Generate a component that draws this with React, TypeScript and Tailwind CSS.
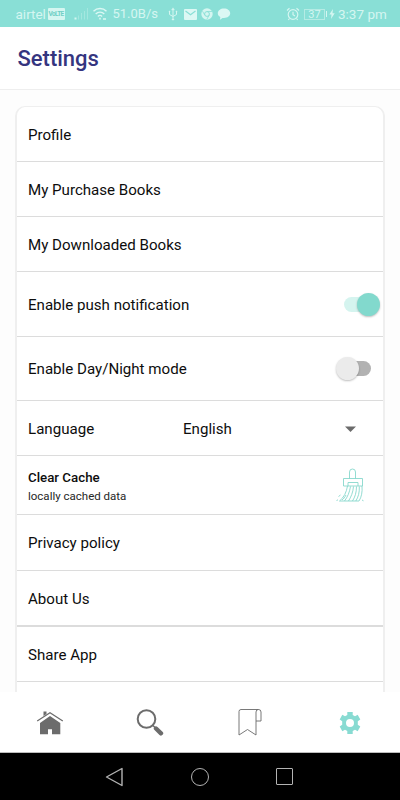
import type { ReactNode } from 'react';
import clsx from 'clsx';

function StatusBar() {
  return (
    <div className="flex h-[27px] items-center bg-[#89dfd6] pt-px pr-[14px] pl-[15.5px] text-[13px] text-[#d5f6f1]">
      <span className="w-[32px] text-[13.500px] whitespace-nowrap">airtel</span>
      <span className="flex h-[12px] w-[17px] items-center justify-center rounded-[1px] bg-[#d5f6f1] text-[6.500px] leading-none font-bold tracking-[-0.6px] text-[#6fcfc5]">
        VoLTE
      </span>
      <svg className="ml-2 h-3.5 w-4" viewBox="0 0 16 14" fill="none" stroke="#d5f6f1">
        <path d="M2.500 10.500v2" strokeWidth="2" />
        <path d="M5.500 8.500v4M8.500 6v6.500M11.500 4v8.500M14.500 1v11.500" opacity=".35" />
      </svg>
      <svg className="ml-[3px] h-3.5 w-4" viewBox="0 0 16 14" fill="none" stroke="#dcf8f4" strokeWidth="1.400">
        <path d="M1.500 4.200a9.300 9.300 0 0 1 13 0M3.700 6.900a6.200 6.200 0 0 1 8.600 0M5.900 9.400a3 3 0 0 1 4.200 0" />
        <path d="M8 10.800v1.700M11 12h3" strokeWidth="1.500" />
      </svg>
      <span className="ml-[5px] w-12 whitespace-nowrap">51.0B/s</span>
      <svg className="ml-[6px] h-3.5 w-3" viewBox="0 0 12 14" fill="none" stroke="#d5f6f1">
        <path d="M6 2v10M2.500 5v2.500L6 9.500l3.500-2V5" />
        <path d="M4.500 3 6 .7 7.500 3zM5 12h2v1H5zM2 4h1v1H2zM9 4h1v1H9z" fill="#d5f6f1" strokeWidth=".4" />
      </svg>
      <svg className="ml-[5px] h-[11px] w-[13px]" viewBox="0 0 13 11">
        <rect width="13" height="11" rx="1" fill="#dcf8f4" />
        <path d="m1.500 2 5 3.700 5-3.700" fill="none" stroke="#89dfd6" strokeWidth="1.200" />
      </svg>
      <svg className="ml-1 h-3 w-3" viewBox="0 0 12 12">
        <circle cx="6" cy="6" r="5.700" fill="#d5f6f1" />
        <circle cx="6" cy="6" r="2.400" fill="none" stroke="#89dfd6" />
        <path d="M6 3.500h5M3.800 7.200 1.500 3.200M8.200 7.200 5.700 11.500" stroke="#89dfd6" strokeWidth=".8" />
      </svg>
      <svg className="ml-1 h-3 w-3.5" viewBox="0 0 14 12" fill="#dcf8f4">
        <path d="M7 .5c3.500 0 6.200 2.100 6.200 4.800S10.500 10 7 10c-.5 0-1 0-1.500-.1L3 11.800l.3-2.700C1.800 8.200.8 6.900.8 5.300.8 2.600 3.500.5 7 .5z" />
      </svg>
      <svg className="ml-auto h-3.5 w-3.5" viewBox="0 0 14 14" fill="none" stroke="#d5f6f1" strokeWidth="1.200">
        <circle cx="7" cy="7.500" r="4.800" />
        <path d="M7 4.700v3l2 1.200M1 3.500 3.500 1.200M13 3.500l-2.500-2.300M3.500 11.500l-1.200 1.500M10.500 11.500l1.200 1.500" />
      </svg>
      <div className="ml-1 flex h-[11px] w-[21px] items-center justify-center border border-[#b5ebe4] text-[11px] leading-none">
        37
      </div>
      <div className="ml-px h-1.5 w-px bg-[#d5f6f1]" />
      <svg className="ml-0.5 h-2.5 w-1.5" viewBox="0 0 6 10" fill="#d5f6f1">
        <path d="M4 0 .3 5.500h2.200L2 10l3.700-5.800H3.500z" />
      </svg>
      <span className="ml-[3px] w-[48px] text-[13.500px] whitespace-nowrap">3:37 pm</span>
    </div>
  );
}

function Row({ className, children }: { className?: string; children: ReactNode }) {
  return (
    <div className={clsx('flex shrink-0 items-center border-b border-[#dcdcdc] pt-0.5 pl-[11px] text-[15.100px]', className)}>
      {children}
    </div>
  );
}

function Toggle({ on }: { on?: boolean }) {
  return (
    <div className={clsx('relative mr-[12px] mb-0.5 ml-auto h-[15px] w-[27px] rounded-full', on ? 'bg-[#d5f4ef]' : 'bg-[#b2b2b2]')}>
      <div
        className={clsx(
          'absolute -top-1 size-[23px] rounded-full shadow-[0_1px_2px_rgba(0,0,0,0.25)]',
          on ? 'left-[13px] bg-[#82d9cd]' : '-left-2 bg-[#ebebeb]',
        )}
      />
    </div>
  );
}

function BrushIcon() {
  return (
    <svg className="mr-[18px] mb-0.5 ml-auto h-9 w-[30px]" viewBox="0 0 30 36" fill="none" stroke="#79d3c7" strokeWidth=".8">
      <path d="M14.500 11.500V5a3 3 0 0 1 6 0v6.500M8.500 11.500h19V19h-19zM13 19v-3.500h10V19M12.500 19c-1 6-3.500 11.500-8 15M27 19c.5 6-.5 11-3 15H4.500" />
      <path d="M15.500 19.500c-1 6-3 10.500-6 14.500M11 28c-1 2-2.500 4-4 5M18.500 19.500c-.5 6-2.500 10.500-5 14.500M21.500 19.500c0 6-1.500 10.500-4 14.500M24.300 19.500c.3 6-1 10.500-3.500 14.500M1.500 33.500l1.500-.7M3.500 29.500l2-1.500M27 33l1.500.8" />
    </svg>
  );
}

export default function App() {
  return (
    <div className="flex h-[800px] w-[400px] flex-col overflow-hidden bg-[#fdfdfd] font-[Roboto,sans-serif] text-[#0d0d0d]">
      <StatusBar />
      <header className="flex h-[63px] shrink-0 items-center border-b border-[#eeeeee] bg-white pt-px pl-[17.500px]">
        <h1 className="text-[22px] font-medium text-[#35357f]">Settings</h1>
      </header>

      <main className="min-h-0 flex-1 overflow-hidden px-[15px] pt-4">
        <div className="flex h-[620px] flex-col rounded-t-[10px] border-2 border-t border-[#efefef] bg-white">
          <Row className="h-[55px]">Profile</Row>
          <Row className="h-[55px]">My Purchase Books</Row>
          <Row className="h-[55px]">My Downloaded Books</Row>
          <Row className="h-[65px]">
            Enable push notification
            <Toggle on />
          </Row>
          <Row className="h-16">
            Enable Day/Night mode
            <Toggle />
          </Row>
          <Row className="h-[55px]">
            <span className="w-[155px]">Language</span>
            English
            <svg className="mr-[27px] ml-auto h-[6px] w-[11px]" viewBox="0 0 11 6" fill="#6b6b6b">
              <path d="M0 .5h11L5.500 6z" />
            </svg>
          </Row>
          <Row className="h-[59px]">
            <div>
              <p className="text-[13.300px] leading-[19px] font-medium">Clear Cache</p>
              <p className="text-[11.500px] leading-[18px] text-[#262626]">locally cached data</p>
            </div>
            <BrushIcon />
          </Row>
          <Row className="h-14">Privacy policy</Row>
          <Row className="h-14 border-b-2">About Us</Row>
          <Row className="h-[55px]">Share App</Row>
        </div>
      </main>

      <nav className="grid h-[61px] shrink-0 grid-cols-4 place-items-center border-b border-[#bdbdbd] bg-white pt-0.5">
        <svg className="h-7 w-7" viewBox="0 0 28 28" fill="#6c6c6c">
          <path d="M14 7 24.300 14v11.300H16v-5h-4v5H4V14z" />
          <path d="M7.500 2.500h3V5l-3 2z" />
          <path d="M1.200 12 14 3.700 26.800 12" fill="none" stroke="#6c6c6c" strokeWidth="1.200" />
        </svg>
        <svg className="h-7 w-7" viewBox="0 0 28 28" fill="none" stroke="#6c6c6c">
          <circle cx="10.500" cy="10" r="8.800" strokeWidth="2" />
          <path d="m17 16.500 3 3" strokeWidth="1.500" />
          <path d="m20 19.500 5 4.800" strokeWidth="4.400" strokeLinecap="round" />
        </svg>
        <svg className="h-7 w-6" viewBox="0 0 24 28" fill="none" stroke="#6a6a6a" strokeWidth=".9">
          <path d="M18 26 9.500 20.500 1 26V2.500q0-2 2-2h17.500M18 26V3Q18 .5 20.500.5T23 3v9h-5" />
        </svg>
        <svg className="h-6 w-6" viewBox="0 0 24 24" fill="#88dbd2">
          <path
            fillRule="evenodd"
            d="M9.300 1h5.400v3l2.300 1.300 2.700-1.500 2.600 4.600-2.500 1.900v3.400l2.500 1.900-2.600 4.600-2.700-1.500-2.300 1.300v3H9.300v-3L7 18.700l-2.700 1.500-2.600-4.600 2.500-1.900v-3.400L1.700 8.400l2.600-4.600L7 5.300 9.300 4zM12 8a4 4 0 1 0 0 8 4 4 0 0 0 0-8z"
          />
        </svg>
      </nav>

      <div className="flex h-[47px] shrink-0 items-center bg-black">
        <svg className="ml-[105px] h-5 w-[18px]" viewBox="0 0 18 20" fill="none" stroke="#b3b3b3" strokeWidth="1.400">
          <path d="M17 1.500v17L1.500 10z" strokeLinejoin="round" />
        </svg>
        <div className="ml-[68px] size-[18px] rounded-full border-[1.500px] border-[#b3b3b3]" />
        <div className="ml-[67px] size-[17px] rounded-[1px] border-[1.500px] border-[#b3b3b3]" />
      </div>
    </div>
  );
}
